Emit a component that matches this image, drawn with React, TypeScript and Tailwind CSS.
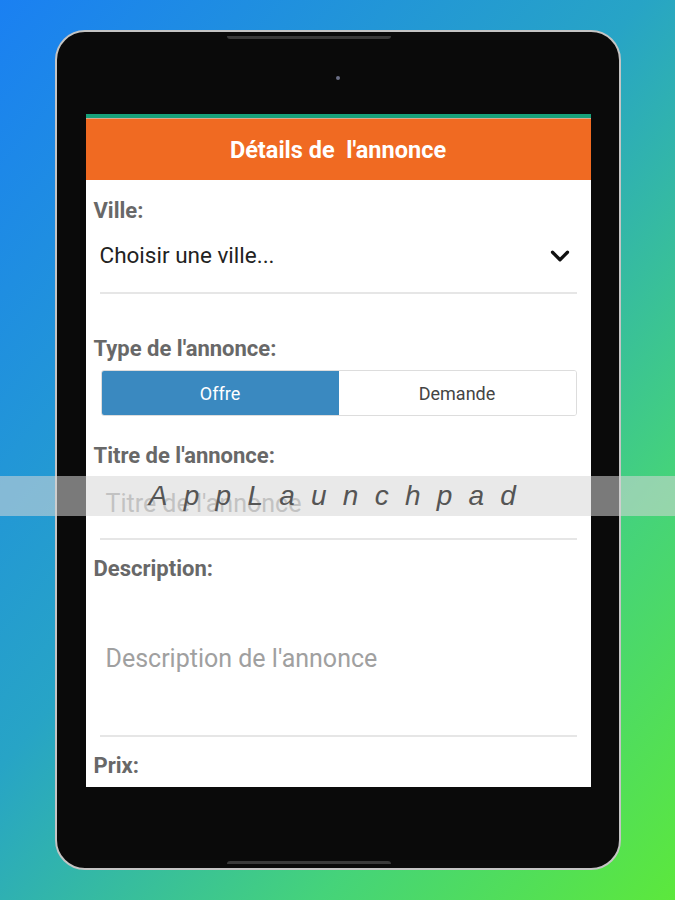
import { ChevronDown } from "lucide-react";

const font = "font-['Roboto','Liberation_Sans',sans-serif]";

function Label({ text, className = "" }: { text: string; className?: string }) {
  return (
    <div className={`h-[28px] flex items-center px-2 text-[22px] font-bold text-[#686868] ${className}`}>
      {text}
    </div>
  );
}

function Divider({ className = "" }: { className?: string }) {
  return <div className={`mx-[14px] h-[2px] bg-[#e6e6e6] ${className}`} />;
}

export default function App() {
  return (
    <div
      className={`relative w-[675px] h-[900px] overflow-hidden bg-[linear-gradient(130deg,#1a80f2_0%,#27a4c6_45%,#45d37a_75%,#5ce83c_100%)] flex items-center justify-center ${font}`}
    >
      {/* tablet frame */}
      <div className="relative w-[566px] h-[840px] rounded-[30px] border-2 border-[#c4c4c4] bg-[#0a0a0a] pt-[82px] pl-[29px] pr-[28px]">
        <div className="absolute top-[4px] left-[170px] w-[164px] h-[3px] bg-[#3a3a3a] rounded-b" />
        <div className="absolute bottom-[4px] left-[170px] w-[164px] h-[3px] bg-[#3a3a3a] rounded-t" />
        <div className="absolute top-[44px] left-[279px] w-[4px] h-[4px] rounded-full bg-[#6b6f86]" />

        {/* screen */}
        <div className="w-[505px] h-[673px] bg-white overflow-hidden">
          <div className="h-[4px] bg-[#17a17a]" />
          <div className="h-[1px] bg-[#d8a890]" />
          <div className="h-[61px] pt-[2px] bg-[#f06a22] flex items-center justify-center text-white text-[23.5px] font-bold whitespace-pre">
            Détails de  l'annonce
          </div>

          <Label text="Ville:" className="mt-[16px]" />
          <div className="h-[64px] mx-[14px] flex items-center justify-between">
            <span className="text-[22.5px] text-[#222222]">Choisir une ville...</span>
            <ChevronDown size={30} strokeWidth={2.6} className="mr-[2px] text-[#111111]" />
          </div>
          <Divider className="mt-[4px]" />

          <Label text="Type de l'annonce:" className="mt-[40px]" />
          <div className="mt-[8px] ml-[15px] mr-[14px] h-[46px] flex rounded-[3px] border border-[#dddddd] overflow-hidden text-[18px]">
            <div className="w-1/2 bg-[#3a89c0] text-white flex items-center justify-center">Offre</div>
            <div className="w-1/2 bg-white text-[#444444] flex items-center justify-center">Demande</div>
          </div>

          <Label text="Titre de l'annonce:" className="mt-[25px]" />
          <div className="h-[69px] mx-[14px] px-[6px] flex items-center text-[25px] text-[#a8a8a8]">
            Titre de l'annonce
          </div>
          <Divider />

          <Label text="Description:" className="mt-[14px]" />
          <div className="h-[153px] mx-[14px] px-[6px] flex items-center text-[25px] text-[#a0a0a0]">
            Description de l'annonce
          </div>
          <Divider />

          <Label text="Prix:" className="mt-[14px]" />
        </div>
      </div>

      {/* watermark band */}
      <div className="absolute left-0 right-0 top-[476px] h-[40px] bg-[rgba(215,215,215,0.55)] flex items-center justify-center">
        <span className="pl-[6px] text-[28px] italic text-[#555555] tracking-[0.58em] font-['Liberation_Sans',sans-serif]">
          AppLaunchpad
        </span>
      </div>
    </div>
  );
}
